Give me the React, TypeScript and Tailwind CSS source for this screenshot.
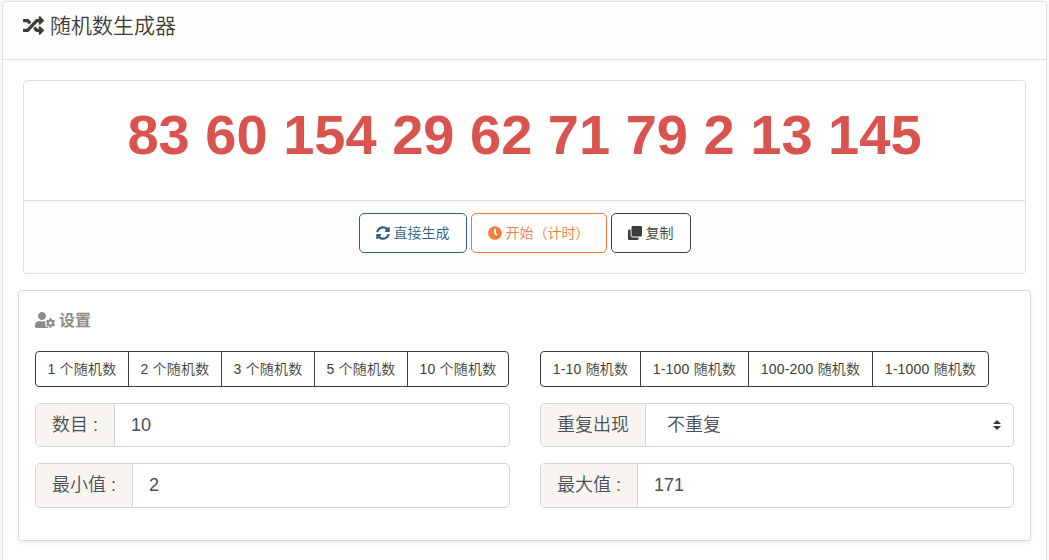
import React from "react";
import { FaRandom, FaSyncAlt, FaClock, FaClone, FaUserCog } from "react-icons/fa";

type Preset = { label: string; width: string };

const countPresets: Preset[] = [
  { label: "1 个随机数", width: "w-[94px]" },
  { label: "2 个随机数", width: "w-[94px]" },
  { label: "3 个随机数", width: "w-[94px]" },
  { label: "5 个随机数", width: "w-[94px]" },
  { label: "10 个随机数", width: "w-[102px]" },
];

const rangePresets: Preset[] = [
  { label: "1-10 随机数", width: "w-[101px]" },
  { label: "1-100 随机数", width: "w-[109px]" },
  { label: "100-200 随机数", width: "w-[125px]" },
  { label: "1-1000 随机数", width: "w-[117px]" },
];

function Presets({ items }: { items: Preset[] }) {
  return (
    <div className="flex h-9">
      {items.map(({ label, width }) => (
        <button
          key={label}
          className={`-ml-px flex shrink-0 items-center justify-center whitespace-nowrap border border-[#3e3f3a] text-sm leading-none tracking-[0.2px] text-[#3e3f3a] first:ml-0 first:rounded-l last:rounded-r ${width}`}
        >
          {label}
        </button>
      ))}
    </div>
  );
}

function Field({ label, children, className }: { label: string; children: React.ReactNode; className: string }) {
  return (
    <div className={`flex rounded-[5px] border border-[#ced4da] text-lg text-[#495057] ${className}`}>
      <span className="flex shrink-0 items-center whitespace-nowrap rounded-l-[4px] border-r border-[#ced4da] bg-[#f8f5f0] px-4 pb-px">
        {label}
      </span>
      {children}
    </div>
  );
}

export default function App() {
  return (
    <div className="flex h-[560px] overflow-hidden bg-[#f8f8f7] pl-[2px] pr-[2px] pt-px font-['Liberation_Sans','Noto_Sans_CJK_SC',sans-serif] font-[350] text-[#3e3f3a]">
      <main className="h-[620px] w-full rounded border border-[#dfdfdb] bg-white">
        <header className="flex h-[58px] items-center gap-[6px] rounded-t border-b border-[#e0dfdb] bg-[#fdfdfb] px-5 pb-[11px]">
          <FaRandom className="size-[21px]" />
          <h1 className="text-[21px] font-[350] leading-none">随机数生成器</h1>
        </header>

        <section className="mx-5 mt-5 h-[194px] rounded border border-[#e0dfdb]">
          <div className="flex h-[119px] justify-center pt-5">
            <p className="whitespace-nowrap text-[56px] font-bold leading-[67px] text-[#d9534f]">
              83 60 154 29 62 71 79 2 13 145
            </p>
          </div>
          <div className="flex h-[73px] justify-center gap-1 rounded-b border-t border-[#e0dfdb] bg-[#fdfdfb] pt-3 text-sm leading-none">
            <button className="flex h-10 w-[108px] items-center gap-1 rounded-[5px] border border-[#325d88] bg-white px-4 text-[#325d88]">
              <FaSyncAlt className="size-[14px]" />
              直接生成
            </button>
            <button className="flex h-10 w-[136px] items-center gap-1 whitespace-nowrap rounded-[5px] border border-[#f47c3c] bg-white px-4 text-[#f47c3c]">
              <FaClock className="size-[14px]" />
              开始（计时）
            </button>
            <button className="flex h-10 w-20 items-center gap-1 rounded-[5px] border border-[#3e3f3a] bg-white px-4">
              <FaClone className="size-[14px]" />
              复制
            </button>
          </div>
        </section>

        <section className="mx-[15px] mt-4 h-[251px] rounded border border-[#dad8d2] px-4 pt-5 shadow-[0_2px_4px_rgba(0,0,0,0.075)]">
          <h2 className="flex h-5 items-center gap-1 text-base font-bold leading-none text-[#8e8c84]">
            <FaUserCog className="mb-[2px] h-4 w-5" />
            设置
          </h2>
          <div className="mt-5 grid grid-cols-[475px_474px] gap-x-[30px]">
            <div>
              <Presets items={countPresets} />
              <Field label="数目 :" className="mt-4 h-11">
                <input defaultValue="10" className="min-w-0 flex-1 px-4 outline-none" />
              </Field>
              <Field label="最小值 :" className="mt-4 h-[45px]">
                <input defaultValue="2" className="min-w-0 flex-1 px-4 pb-px outline-none" />
              </Field>
            </div>
            <div>
              <Presets items={rangePresets} />
              <Field label="重复出现" className="mt-4 h-11">
                <div className="flex flex-1 items-center justify-between pl-[21px] pr-3">
                  不重复
                  <svg viewBox="0 0 8 10" className="h-[10px] w-2 fill-[#343a40]">
                    <path d="M4 0 0 4h8zM4 10 0 6h8z" />
                  </svg>
                </div>
              </Field>
              <Field label="最大值 :" className="mt-4 h-[45px]">
                <input defaultValue="171" className="min-w-0 flex-1 px-4 pb-px outline-none" />
              </Field>
            </div>
          </div>
        </section>
      </main>
    </div>
  );
}
